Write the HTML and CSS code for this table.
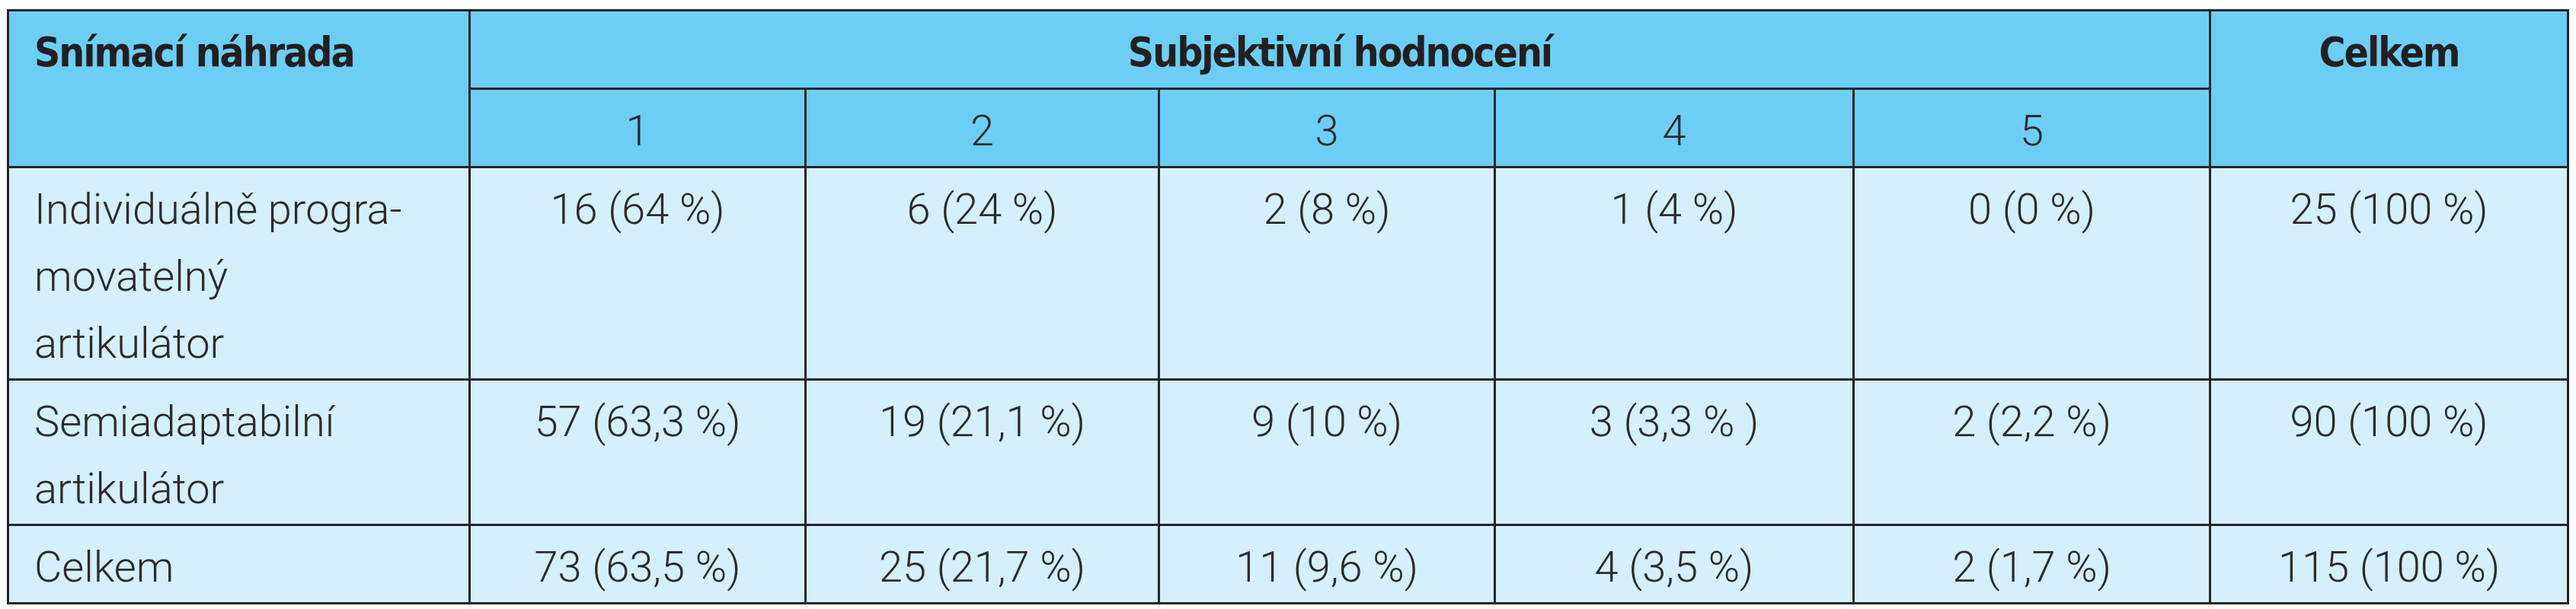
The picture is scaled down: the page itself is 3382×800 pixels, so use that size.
FILE: index.html
```html
<!DOCTYPE html>
<html lang="cs">
<head>
<meta charset="utf-8">
<title>Tabulka</title>
<link rel="stylesheet" href="styles.css">
</head>
<body>
<table class="tbl">
  <colgroup>
    <col class="c0">
    <col class="c1">
    <col class="c2">
    <col class="c3">
    <col class="c4">
    <col class="c5">
    <col class="c6">
  </colgroup>
  <thead>
    <tr>
      <th class="hd left" rowspan="2">Snímací náhrada</th>
      <th class="hd" colspan="5">Subjektivní hodnocení</th>
      <th class="hd" rowspan="2">Celkem</th>
    </tr>
    <tr>
      <th class="num">1</th>
      <th class="num">2</th>
      <th class="num">3</th>
      <th class="num">4</th>
      <th class="num">5</th>
    </tr>
  </thead>
  <tbody>
    <tr>
      <td class="left">Individuálně progra-<br>movatelný<br>artikulátor</td>
      <td>16 (64 %)</td>
      <td>6 (24 %)</td>
      <td>2 (8 %)</td>
      <td>1 (4 %)</td>
      <td>0 (0 %)</td>
      <td>25 (100 %)</td>
    </tr>
    <tr>
      <td class="left">Semiadaptabilní<br>artikulátor</td>
      <td>57 (63,3 %)</td>
      <td>19 (21,1 %)</td>
      <td>9 (10 %)</td>
      <td>3 (3,3 % )</td>
      <td>2 (2,2 %)</td>
      <td>90 (100 %)</td>
    </tr>
    <tr>
      <td class="left">Celkem</td>
      <td>73 (63,5 %)</td>
      <td>25 (21,7 %)</td>
      <td>11 (9,6 %)</td>
      <td>4 (3,5 %)</td>
      <td>2 (1,7 %)</td>
      <td>115 (100 %)</td>
    </tr>
  </tbody>
</table>
</body>
</html>
```

FILE: styles.css
```css
html, body {
  margin: 0;
  padding: 0;
  background: #ffffff;
}

body {
  padding: 12px 0 0 9px;
}

.tbl {
  border-collapse: collapse;
  table-layout: fixed;
  width: 3363px;
  font-family: Roboto, "Liberation Sans", sans-serif;
  font-weight: 300;
  font-size: 56px;
  line-height: 88px;
  color: #2b2a2c;
}

.c0 { width: 606px; }
.c1 { width: 441px; }
.c2 { width: 464px; }
.c3 { width: 441px; }
.c4 { width: 471px; }
.c5 { width: 468px; }
.c6 { width: 470px; }

.tbl th,
.tbl td {
  border: 3px solid #25252a;
  padding: 10px 8px 2px 8px;
  vertical-align: top;
  text-align: center;
  white-space: nowrap;
}

.tbl th {
  background: #6dcef5;
}

.tbl td {
  background: #d5effc;
}

.tbl .hd {
  font-family: "Liberation Sans Narrow", "DejaVu Sans Condensed", "Liberation Sans", sans-serif;
  font-weight: 700;
  font-size: 53px;
  letter-spacing: -2px;
  color: #231f20;
}

.tbl .num {
  font-weight: 300;
}

.tbl .left {
  text-align: left;
  padding-left: 33px;
}
```
